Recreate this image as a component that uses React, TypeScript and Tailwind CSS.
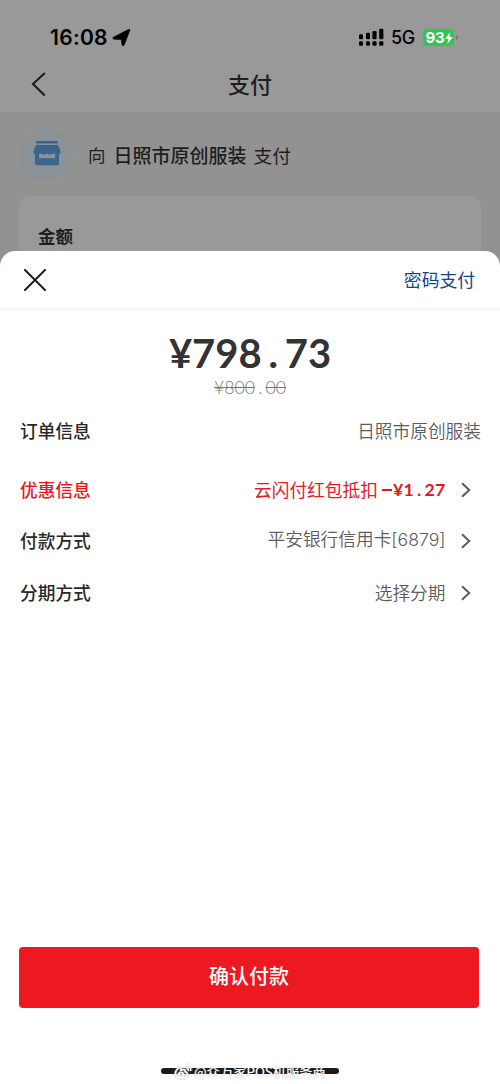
import type { ReactNode } from "react";

const cjk = "font-['Noto_Sans_CJK_SC',sans-serif]";

/** Price whose decimal point takes a whole digit cell. */
function Price({ whole, cents, dot }: { whole: string; cents: string; dot: string }) {
  return (
    <>
      {whole}
      <span className={`inline-block text-center ${dot}`}>.</span>
      {cents}
    </>
  );
}

function Chevron() {
  return (
    <svg className="mr-[9.5px] ml-[14px] h-[18px] w-[12px] shrink-0" viewBox="0 0 12 18" fill="none" stroke="#5c5c5c" strokeWidth="2">
      <path d="M2 2.2 9.3 9 2 15.8" />
    </svg>
  );
}

function Row({ label, tone, height, children, arrow }: { label: string; tone: string; height: string; children: ReactNode; arrow?: boolean }) {
  return (
    <div className={`flex items-center justify-between text-[17.7px] whitespace-nowrap ${height}`}>
      <span className={`mb-[2px] font-medium ${tone}`}>{label}</span>
      <span className="flex items-center">
        {children}
        {arrow && <Chevron />}
      </span>
    </div>
  );
}

function StatusBar() {
  return (
    <div className="flex h-[57px] shrink-0 items-start pt-[25px] pl-[50px] font-['Inter',sans-serif] text-black">
      <span className="w-[59px] text-[21px] leading-[26px] font-semibold tracking-[0.3px] whitespace-nowrap">16:08</span>
      <svg className="mt-[3px] ml-[3px] h-[19px] w-[19px]" viewBox="0 0 19 19">
        <path d="M1.4 9.2 16.4 1.5Q18.4 .7 17.7 2.7L12.2 17Q10.7 19 10 16.8L9.3 11.6 2 11.2Q-.2 10.3 1.4 9.2Z" stroke="black" strokeWidth=".6" />
      </svg>
      <svg className="mt-[3px] ml-[227px] h-[19px] w-[27px]" viewBox="0 0 27 19">
        <rect x="1" y="6.2" width="4" height="5" rx="1.3" />
        <rect x="8" y="4.8" width="4" height="6.4" rx="1.3" />
        <rect x="14.4" y="3" width="4.2" height="8.2" rx="1.3" />
        <rect x="21.2" y=".7" width="4.2" height="10.5" rx="1.3" />
        <rect x="1" y="13.2" width="4" height="4.6" rx="1.3" />
        <rect x="8" y="13.2" width="4" height="4.6" rx="1.3" />
        <rect x="14.4" y="13.2" width="4.2" height="4.6" rx="1.3" />
        <rect x="21.2" y="13.2" width="4.2" height="4.6" rx="1.3" />
      </svg>
      <span className="ml-[6px] w-[26px] text-[18px] leading-[26px] font-medium tracking-[-0.5px]">5G</span>
      <div className="mt-[4px] ml-[6px] flex h-[17px] w-[31px] items-center rounded-[4.5px] bg-[#31c456] pl-[2.5px] text-[15px] leading-[17px] font-bold text-white">
        <span className="tracking-[-0.3px]">93</span>
        <svg className="ml-px h-[12px] w-[8px] shrink-0" viewBox="0 0 8 12" fill="white">
          <path d="M5.3 0 .3 6.8H3.4L2.3 12 7.8 4.9H4.5Z" />
        </svg>
      </div>
      <div className="mt-[10px] ml-[2px] h-[5px] w-[1.5px] rounded-r bg-[#718078]" />
    </div>
  );
}

function Shop() {
  return (
    <div className="flex size-[53px] items-center justify-center rounded-full bg-[#8b9297]">
      <svg className="mb-[1px] h-[25px] w-[28px]" viewBox="0 0 28 25">
        <rect x="3" y="0" width="22" height="2.5" rx=".8" fill="#3c6488" />
        <path d="M3.8 4H24.2Q25.2 4 25.6 5L27.5 10.2Q27.5 13.5 24.5 13.5 22 13.5 20.7 12.3 19.4 13.5 17.3 13.5 15.2 13.5 14 12.3 12.8 13.5 10.7 13.5 8.6 13.5 7.3 12.3 6 13.5 3.5 13.5 .5 13.5 .5 10.2L2.4 5Q2.8 4 3.8 4Z" fill="#39648b" />
        <path d="M2 13H6V17.2H22.2V13H26V22.6Q26 24.2 24.5 24.2H3.6Q2 24.2 2 22.6Z" fill="#376791" />
      </svg>
    </div>
  );
}

export default function App() {
  return (
    <div className={`relative flex h-[1084px] w-[500px] flex-col overflow-hidden bg-[#929292] text-[#1f1f1f] ${cjk}`}>
      <header className="flex h-[112px] shrink-0 flex-col bg-[#999]">
        <StatusBar />
        <div className="grid h-[55px] grid-cols-3 items-center">
          <svg className="mb-[2px] ml-[30px] h-[26px] w-[18px]" viewBox="0 0 18 26" fill="none" stroke="#1d1d1d" strokeWidth="2.1">
            <path d="M14.8 2 3 13 14.8 24.5" />
          </svg>
          <h1 className="mb-[4px] text-center text-[22px] leading-[30px] font-medium">支付</h1>
        </div>
      </header>
      <section className="flex h-[84px] shrink-0 items-center pl-[20px] text-[18.7px] whitespace-nowrap">
        <Shop />
        <span className="mt-[3px] ml-[15px] text-[17.5px]">向</span>
        <span className="mt-[3px] ml-[8px] text-[19px] font-medium">日照市原创服装</span>
        <span className="mt-[3px] ml-[7px]">支付</span>
      </section>
      <section className="mx-[19px] h-[55px] shrink-0 rounded-t-[12px] bg-[#999] pt-[27px] pl-[19px] text-[17.5px] leading-[26px] font-bold">
        金额
      </section>

      <main className="absolute inset-x-0 top-[251px] bottom-0 flex flex-col rounded-t-[15px] bg-white">
        <div className="flex h-[59px] shrink-0 items-center justify-between border-b-[1.5px] border-[#f3f3f3] pr-[25px] pl-[24px]">
          <svg className="size-[22px]" viewBox="0 0 22 22" fill="none" stroke="#1e1e1e" strokeWidth="2" strokeLinecap="round">
            <path d="M1 1 21 21M21 1 1 21" />
          </svg>
          <span className="mb-px text-[17.8px] text-[#164487]">密码支付</span>
        </div>
        <div className="flex h-[95px] shrink-0 flex-col items-center pt-[19px] font-['Lato',sans-serif]">
          <strong className="text-[40px] leading-[48px] font-bold text-[#333]">
            <Price whole="¥798" cents="73" dot="w-[23px]" />
          </strong>
          <s className="text-[17.7px] leading-[21px] font-light text-[#777]">
            <Price whole="¥800" cents="00" dot="w-[10.5px]" />
          </s>
        </div>
        <div className="flex flex-col pr-[19px] pl-[20px] text-[#5c5c5c]">
          <Row label="订单信息" tone="text-[#282828]" height="h-[52px]">
            <span className="mb-[2px] font-[350]">日照市原创服装</span>
          </Row>
          <Row label="优惠信息" tone="text-[#e91622]" height="h-[66px]" arrow>
            <span className="mb-[2px] text-[#e02029]">云闪付红包抵扣</span>
            <span className="ml-[4px] flex items-center font-['Lato',sans-serif] text-[17.7px] font-bold text-[#e91622]">
              <span className="mr-[1px] h-[2px] w-[10px] bg-[#e91622]" />
              <span className="tracking-[0.25px]">
                <Price whole="¥1" cents="27" dot="w-[10.5px]" />
              </span>
            </span>
          </Row>
          <Row label="付款方式" tone="text-[#282828]" height="h-[36px]" arrow>
            <span className="mb-[3px] font-[350]">
              平安银行信用卡<span className="font-['Inter',sans-serif]">[6879]</span>
            </span>
          </Row>
          <Row label="分期方式" tone="text-[#282828]" height="h-[68px]" arrow>
            <span className="mb-[2px] font-[350]">选择分期</span>
          </Row>
        </div>
        <button className="mt-auto mr-[21px] mb-[76px] ml-[19px] h-[61px] shrink-0 rounded-[4px] bg-[#ee1820] pb-[3px] text-[20px] font-medium text-white">
          确认付款
        </button>
        <div className="absolute top-[817px] left-[161px] h-[6px] w-[178px] rounded-full bg-[#1b1b1b]" />
        <div className="absolute top-[812px] left-[174px] flex h-[18px] items-center text-white">
          <svg className="h-[16px] w-[18px] [filter:drop-shadow(0_0_1px_#aaa)]" viewBox="0 0 18 16" fill="none" stroke="white" strokeWidth="1.5">
            <path d="M7 4C4 3 1 7 1.5 10.5 2 15 12 15.5 13.5 11 14 9 12 8 11 7.5 12 5 9 5 7 6.5Z" />
            <path d="M12 3.8Q15 4 14.3 7M12 1Q17.5 1 16.7 7" />
            <circle cx="7" cy="11" r="2.5" />
          </svg>
          <span className="ml-[2px] text-[13.3px] leading-[18px] whitespace-nowrap [text-shadow:0_0_1px_#aaa]">@众万家POS机服务商</span>
        </div>
      </main>
    </div>
  );
}
